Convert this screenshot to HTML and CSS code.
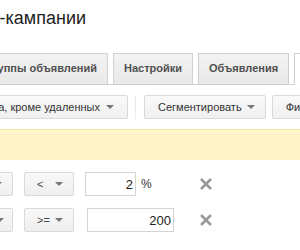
FILE: index.html
```html
<!DOCTYPE html>
<html lang="ru">
<head>
  <meta charset="UTF-8" />
  <title>Кампании</title>
  <link rel="stylesheet" href="styles.css">
</head>
<body>
  <div class="page">
    <h1 class="title">т-кампании</h1>

    <ul class="tabs">
      <li class="tab tab-first">Группы объявлений</li>
      <li class="tab">Настройки</li>
      <li class="tab">Объявления</li>
      <li class="tab active">Ключевые слова</li>
    </ul>

    <div class="toolbar">
      <button class="btn btn-status">Все: включена, кроме удаленных <span class="caret"></span></button>
      <span class="divider"></span>
      <button class="btn">Сегментировать <span class="caret"></span></button>
      <button class="btn">Фильтр <span class="caret"></span></button>
    </div>

    <div class="notice"></div>

    <div class="filters">
      <span class="select select-field">CTR <span class="caret"></span></span>
      <span class="select select-op">&lt; <span class="caret"></span></span>
      <span class="value-cell"><input class="value value-short" value="2"> <span class="unit">%</span></span>
      <span class="remove">
        <svg width="12" height="12" viewBox="0 0 12 12"><path d="M1 1 L11 11 M11 1 L1 11" stroke="#999" stroke-width="2.6"/></svg>
      </span>

      <span class="select select-field">Клики <span class="caret"></span></span>
      <span class="select select-op">&gt;= <span class="caret"></span></span>
      <span class="value-cell"><input class="value value-long" value="200"></span>
      <span class="remove">
        <svg width="12" height="12" viewBox="0 0 12 12"><path d="M1 1 L11 11 M11 1 L1 11" stroke="#999" stroke-width="2.6"/></svg>
      </span>
    </div>
  </div>
</body>
</html>
```

FILE: styles.css
```css
body {
  font-family: 'Liberation Sans', Arial, sans-serif;
  margin: 0;
  background-color: white;
}

.page {
  width: 300px;
  height: 250px;
  overflow: hidden;
}

.title {
  width: 100px;
  margin: 6px 0 0 -14px;
  font-size: 18px;
  font-weight: normal;
  line-height: 24px;
  color: #222;
  text-align: right;
  white-space: nowrap;
}

.tabs {
  display: flex;
  align-items: flex-end;
  gap: 5px;
  list-style: none;
  margin: 23px 0 0;
  padding: 0;
  height: 31px;
  border-bottom: 1px solid #cfcfcf;
}

.tab {
  flex: none;
  box-sizing: border-box;
  height: 31px;
  padding: 0 10px;
  line-height: 29px;
  border: 1px solid #d0d0d0;
  border-bottom: none;
  background: linear-gradient(#f3f3f3, #e8e8e8);
  font-size: 11px;
  font-weight: bold;
  color: #505050;
  white-space: nowrap;
}

.tab-first {
  width: 140px;
  margin-left: -32px;
  overflow: hidden;
  text-align: right;
}

.tab.active {
  width: 100px;
  height: 32px;
  margin-bottom: -1px;
  background: white;
}

.toolbar {
  display: flex;
  align-items: center;
  margin-top: 10px;
  height: 24px;
}

.btn {
  flex: none;
  display: flex;
  align-items: center;
  gap: 5px;
  box-sizing: border-box;
  height: 24px;
  padding: 0 10px 0 13px;
  border: 1px solid #d9d9d9;
  border-radius: 2px;
  background: linear-gradient(#f9f9f9, #f0f0f0);
  font-family: inherit;
  font-size: 11px;
  color: #333;
  white-space: nowrap;
}

.btn + .btn {
  margin-left: 6px;
}

.btn-status {
  width: 200px;
  margin-left: -72px;
  padding-right: 13px;
  justify-content: flex-end;
  overflow: hidden;
}

.divider {
  flex: none;
  width: 1px;
  height: 24px;
  margin: 0 8px 0 7px;
  background-color: #ebebeb;
}

.caret {
  display: inline-block;
  flex: none;
  width: 0;
  height: 0;
  border-left: 4px solid transparent;
  border-right: 4px solid transparent;
  border-top: 4px solid #777;
}

.btn-status .caret {
  margin-left: 1px;
}

.notice {
  margin-top: 10px;
  height: 30px;
  border-top: 1px solid #f1e4a9;
  background-color: #fff5c9;
}

.filters {
  display: grid;
  grid-template-columns: 60px 50px 104px auto;
  column-gap: 11px;
  row-gap: 12px;
  align-items: center;
  margin: 12px 0 0 -47px;
}

.select {
  display: flex;
  align-items: center;
  justify-content: space-between;
  box-sizing: border-box;
  height: 24px;
  padding: 0 10px 0 12px;
  border: 1px solid #dadada;
  border-radius: 2px;
  background: linear-gradient(#f8f8f8, #efefef);
  font-size: 11px;
  color: #444;
}

.value-cell {
  display: flex;
  align-items: center;
  gap: 5px;
}

.value {
  box-sizing: border-box;
  height: 24px;
  padding: 0 2px;
  border: 1px solid #d4d4d4;
  font-family: inherit;
  font-size: 13px;
  color: #222;
  text-align: right;
}

.value-short {
  width: 51px;
}

.value-long {
  width: 87px;
  margin-left: 2px;
}

.unit {
  font-size: 12px;
  color: #333;
}

.remove {
  display: flex;
}
```
